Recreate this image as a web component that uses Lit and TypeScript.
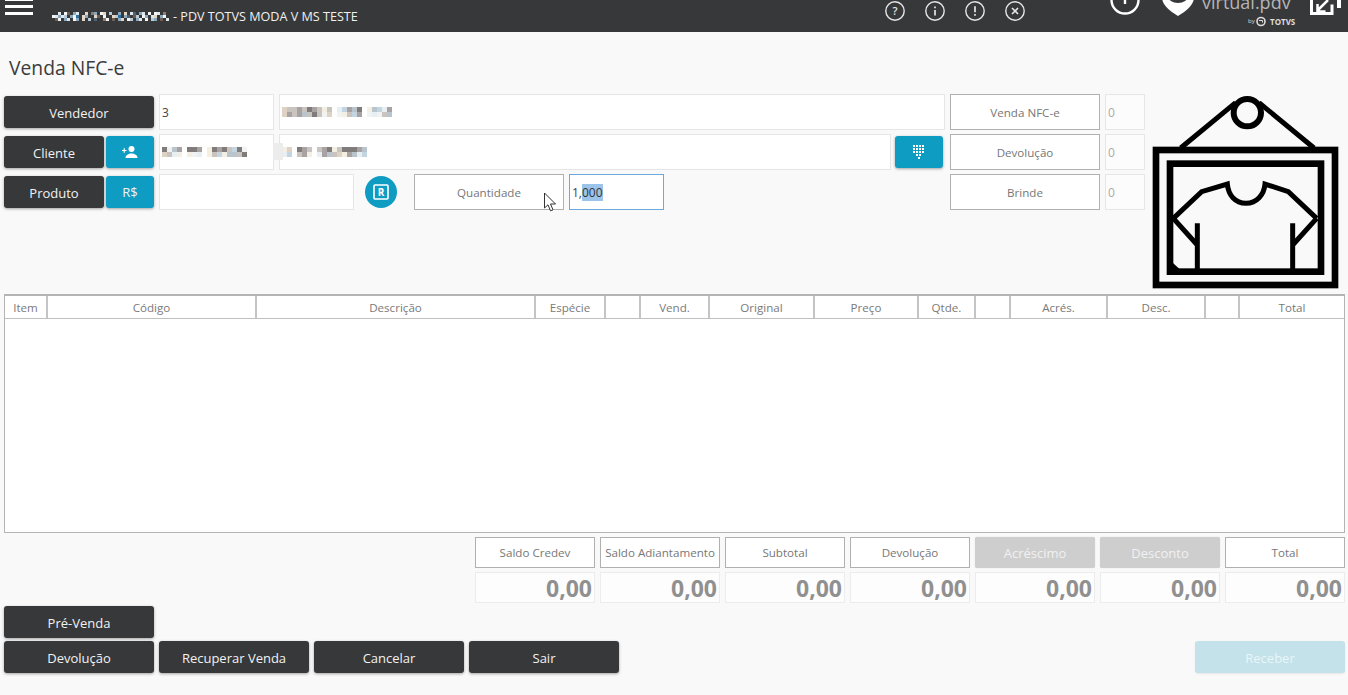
import { LitElement, html, css, svg } from "lit";
import { customElement } from "lit/decorators.js";

const mosaic = (cells: string, colors: string[], size = 4) => {
  const rows = cells.split("|");
  const w = Math.max(...rows.map((r) => r.length)) * size;
  const h = rows.length * size;
  return html`<svg class="mosaic" width=${w} height=${h} viewBox="0 0 ${w} ${h}" shape-rendering="crispEdges">
    ${rows.map((r, y) =>
      [...r].map((c, x) => {
        const idx = parseInt(c, 36);
        return isNaN(idx) || c === "." ? null : svg`<rect x=${x * size} y=${y * size} width=${size} height=${size} fill=${colors[idx]}></rect>`;
      })
    )}
  </svg>`;
};

const circleIcon = (inner: unknown) => html`<svg class="hicon" width="20" height="20" viewBox="0 0 20 20" fill="none" stroke="#e6e6e6" stroke-width="1.4">
  <circle cx="10" cy="10" r="9.2"></circle>${inner}
</svg>`;

@customElement("app-root")
export class AppRoot extends LitElement {
  static styles = css`
    :host { display: block; width: 1348px; height: 695px; overflow: hidden; background: #f9f9f9; font-family: "Open Sans", "Noto Sans", sans-serif; color: #7b7b7b; position: relative; }
    .top { height: 32px; background: #37383a; display: flex; overflow: hidden; color: #f0f0f0; }
    .burger { width: 28px; margin: -2px 0 0 5px; flex: none; display: flex; flex-direction: column; gap: 4px; }
    .burger i { display: block; height: 3px; background: #fff; }
    .tenant { margin-left: 16px; display: flex; align-items: center; gap: 1px; font-size: 12.6px; height: 32px; width: 310px; flex: none; white-space: nowrap; }
    .mosaic { display: block; flex: none; }
    .hicons { display: flex; gap: 20px; margin-left: 526px; align-items: flex-start; padding-top: 1px; flex: none; }
    .hicon { display: block; }
    .brand { margin-left: 75px; flex: none; display: block; }
    h1 { margin: 0; font-weight: 400; font-size: 19.3px; line-height: 26px; color: #3c3c3e; padding: 23px 0 13px 9px; height: 26px; }
    .form { display: flex; padding-left: 4px; height: 200px; }
    .rows { width: 1141px; flex: none; display: flex; flex-direction: column; gap: 4px; }
    .row { display: flex; height: 36px; align-items: center; position: relative; }
    .btn { display: flex; align-items: center; justify-content: center; height: 32px; padding-top: 2px; border-radius: 3px; background: #37383a; color: #f2f2f2; font-size: 13px; box-shadow: 0 1px 3px rgba(0,0,0,.35); flex: none; box-sizing: border-box; }
    .w150 { width: 150px; }
    .w100 { width: 100px; }
    .blue { background: #0f9cc2; width: 48px; margin-left: 2px; padding-top: 0; font-size: 13px; }
    .field { height: 36px; box-sizing: border-box; border: 1px solid #e6e6e6; background: #fff; display: flex; align-items: center; padding: 0 2px; font-size: 12px; color: #444; flex: none; }
    .ml5 { margin-left: 5px; }
    .patch { position: absolute; left: 269px; top: 9px; width: 10px; height: 17px; background: #ececec; }
    .label { height: 36px; width: 150px; box-sizing: border-box; border: 1px solid #b0b0b0; background: #fff; display: flex; align-items: center; justify-content: center; font-size: 11.6px; color: #777; flex: none; }
    .num { width: 40px; background: #fcfcfc; color: #aaa; padding-left: 2px; margin-left: 5px; }
    .round { width: 32px; height: 32px; border-radius: 50%; background: #0f9cc2; margin-left: 11px; margin-right: 17px; flex: none; display: flex; align-items: center; justify-content: center; }
    .qty { width: 95px; border-color: #6ea8dc; padding-left: 2px; color: #444; }
    .qty mark { background: #9cc4ea; color: #333; }
    .hanger { display: block; margin: 1px 0 0 7px; flex: none; }
    .table { margin: 0 3px 0 4px; height: 239px; box-sizing: border-box; border: 1px solid #b4b4b4; border-top-width: 2px; background: #fff; }
    .thead { display: grid; grid-template-columns: 43px 209px 279px 70px 35px 69px 105px 104px 57px 35px 97px 98px 34px 1fr; height: 22px; border-bottom: 1px solid #c0c0c0; box-sizing: content-box; }
    .thead span { border-right: 2px solid #c4c4c4; font-size: 11.6px; color: #7a7a7a; display: flex; align-items: center; justify-content: center; }
    .thead span:last-child { border-right: 0; }
    .totals { display: grid; grid-template-columns: repeat(7, 120px); column-gap: 5px; row-gap: 4px; margin: 4px 0 0 475px; }
    .tl { height: 31px; width: 120px; }
    .dis { background: #cecece; border: 0; color: #f1f1f1; border-radius: 2px; font-size: 13px; box-shadow: 0 0 1px rgba(0,0,0,.2); }
    .tv { height: 31px; box-sizing: border-box; border: 1px solid #ececec; background: #fdfdfd; font-size: 23px; font-weight: 700; color: #909090; display: flex; align-items: center; justify-content: flex-end; padding-right: 2px; }
    .bottom { margin: 3px 0 0 4px; display: flex; flex-direction: column; gap: 3px; }
    .brow { display: flex; gap: 5px; }
    .recv { width: 150px; margin-left: auto; margin-right: 3px; background: #c3e2ea; color: #e9f5f8; box-shadow: 0 1px 2px rgba(0,0,0,.08); }
    .cursor { position: absolute; left: 543px; top: 192px; display: block; }
  `;

  render() {
    const c1 = ["#f5f5f5", "#8aa9bf", "#6f5d52", "#e2d6c5", "#2f6f9e", "#b9c9d6", "#8d7d72", "#dfe8ee", "#4d5f70"];
    const p = ["#ded2c4", "#c9c4c0", "#a8a3a2", "#e7eff3", "#f4efe3", "#b9c4cd", "#c4d5e2", "#807c7c", "#f1f3f3"];
    const hdr = "...7.02.17..3.61.03.5..1.3.78.17.0.07.6.|.07175.104.31..32.0..354.18.25.01.73.10.|..20.17.01.3.5.8..60.2.13.05.17.0.51.2.7.";
    return html`
      <div class="top">
        <div class="burger"><i></i><i></i><i></i></div>
        <div class="tenant">
          ${mosaic(hdr, c1, 3)}
          <span>- PDV TOTVS MODA V MS TESTE</span>
        </div>
        <div class="hicons">
          ${circleIcon(svg`<text x="10" y="14" text-anchor="middle" font-size="11" font-weight="600" fill="#e6e6e6" stroke="none">?</text>`)}
          ${circleIcon(svg`<path d="M10 9v5.5M10 5.6v1.6" stroke-width="1.7"></path>`)}
          ${circleIcon(svg`<path d="M10 5.2v6M10 13v1.700" stroke-width="1.7"></path>`)}
          ${circleIcon(svg`<path d="M7 7l6 6M13 7l-6 6" stroke-width="1.6"></path>`)}
        </div>
        <svg class="brand" width="248" height="32" viewBox="0 0 248 32">
          <circle cx="25" cy="0" r="13.5" fill="none" stroke="#fff" stroke-width="2.4"></circle>
          <path d="M25 -5v9" stroke="#fff" stroke-width="2.4"></path>
          <path d="M78 -8c-8 0-14 2-16 5 0 7 6 13 16 19 10-6 16-12 16-19-2-3-8-5-16-5z" fill="#fff"></path>
          <path d="M68 -4a10 7 0 0 0 20 0z" fill="#37383a"></path>
          <text x="102" y="9" font-size="18" fill="#b5b5b5">virtual.pdv</text>
          <text x="148" y="23" font-size="6" fill="#ddd">by</text>
          <circle cx="161" cy="21.500" r="4" fill="none" stroke="#ddd" stroke-width="1.6"></circle>
          <path d="M159 20.500h3.500v2" fill="none" stroke="#ddd" stroke-width="1"></path>
          <text x="170" y="24.500" font-size="8" font-weight="700" fill="#ddd">TOTVS</text>
          <path d="M211.500 -2v15.500h20.500v-9" fill="none" stroke="#fff" stroke-width="3"></path>
          <path d="M217 11l11-11M217.500 4v7.500h8" fill="none" stroke="#fff" stroke-width="2.500"></path>
          <path d="M239 -2v10" stroke="#fff" stroke-width="4"></path>
        </svg>
      </div>

      <h1>Venda NFC-e</h1>

      <div class="form">
        <div class="rows">
          <div class="row">
            <div class="btn w150">Vendedor</div>
            <div class="field ml5" style="width:115px">3</div>
            <div class="field ml5" style="width:666px">${mosaic("0112172141.36257.45632|0212517180.84162.83815", p, 5)}</div>
            <div class="label ml5">Venda NFC-e</div>
            <div class="field num">0</div>
          </div>
          <div class="row">
            <div class="btn w100">Cliente</div>
            <div class="btn blue">
              <svg width="16" height="12" viewBox="0 0 16 12" fill="#fff"><circle cx="9.5" cy="3" r="3"></circle><path d="M3.5 12c0-3 3-4.500 6-4.500s6 1.500 6 4.500z"></path><path d="M0 4.500h4.500M2.250 2.250v4.500" stroke="#fff" stroke-width="1.200"></path></svg>
            </div>
            <div class="field ml5" style="width:115px">${mosaic("7852.772.47271678|0134.483.41645517", p, 5)}</div>
            <div class="field ml5" style="width:612px">${mosaic("40.721.1274177725|36.124.3251042536", p, 5)}</div>
            <span class="patch"></span>
            <div class="btn blue" style="margin-left:4px">
              <svg width="12" height="15" viewBox="0 0 12 15" fill="#fff" shape-rendering="crispEdges">
                ${[0, 3, 6].map((y) => [0, 3, 6, 9].map((x) => svg`<rect x=${x} y=${y} width="2" height="2"></rect>`))}
                ${[3, 6].map((x) => svg`<rect x=${x} y="9" width="2" height="2"></rect>`)}
                <rect x="4.500" y="12" width="2" height="2"></rect>
              </svg>
            </div>
            <div class="label" style="margin-left:7px">Devolução</div>
            <div class="field num">0</div>
          </div>
          <div class="row">
            <div class="btn w100">Produto</div>
            <div class="btn blue">R$</div>
            <div class="field ml5" style="width:195px"></div>
            <div class="round">
              <svg width="16" height="16" viewBox="0 0 16 16"><rect x="1" y="1" width="14" height="14" rx="1" fill="none" stroke="#fff" stroke-width="1.600"></rect><text x="8" y="12" text-anchor="middle" font-size="10" font-weight="700" fill="#fff">R</text></svg>
            </div>
            <div class="label">Quantidade</div>
            <div class="field qty ml5"><span>1,<mark>000</mark></span></div>
            <div class="label" style="margin-left:286px">Brinde</div>
            <div class="field num">0</div>
          </div>
        </div>
        <svg class="hanger" width="187" height="194" viewBox="36 15 561 582" fill="none" stroke="#000" stroke-width="20">
          <rect x="48" y="180" width="537" height="405"></rect>
          <rect x="90" y="221" width="453" height="324"></rect>
          <circle cx="322" cy="68" r="41" stroke-width="18"></circle>
          <path d="M122 174L287 38M522 174L357 38" stroke-width="15"></path>
          <path d="M100 385L185 305L262 282C265 315 285 340 318 340C350 340 372 315 375 282L445 305L530 385" stroke-width="15"></path>
          <path d="M100 385L172 465M172 400V540M530 385L458 465M458 400V540" stroke-width="15"></path>
          <path d="M98 518V540H122Z" fill="#000" stroke="none"></path>
        </svg>
      </div>

      <div class="table">
        <div class="thead">
          ${["Item", "Código", "Descrição", "Espécie", "", "Vend.", "Original", "Preço", "Qtde.", "", "Acrés.", "Desc.", "", "Total"].map((t) => html`<span>${t}</span>`)}
        </div>
      </div>

      <div class="totals">
        <div class="label tl">Saldo Credev</div>
        <div class="label tl">Saldo Adiantamento</div>
        <div class="label tl">Subtotal</div>
        <div class="label tl">Devolução</div>
        <div class="label tl dis">Acréscimo</div>
        <div class="label tl dis">Desconto</div>
        <div class="label tl">Total</div>
        ${Array.from({ length: 7 }, () => html`<div class="tv">0,00</div>`)}
      </div>

      <div class="bottom">
        <div class="brow"><div class="btn w150">Pré-Venda</div></div>
        <div class="brow">
          <div class="btn w150">Devolução</div>
          <div class="btn w150">Recuperar Venda</div>
          <div class="btn w150">Cancelar</div>
          <div class="btn w150">Sair</div>
          <div class="btn recv">Receber</div>
        </div>
      </div>

      <svg class="cursor" width="14" height="21" viewBox="0 0 14 21"><path d="M1.500 1v15l3.500-3.200 2.500 6 2.500-1-2.500-5.800h5z" fill="#fff" stroke="#333" stroke-width="1"></path></svg>
    `;
  }
}
